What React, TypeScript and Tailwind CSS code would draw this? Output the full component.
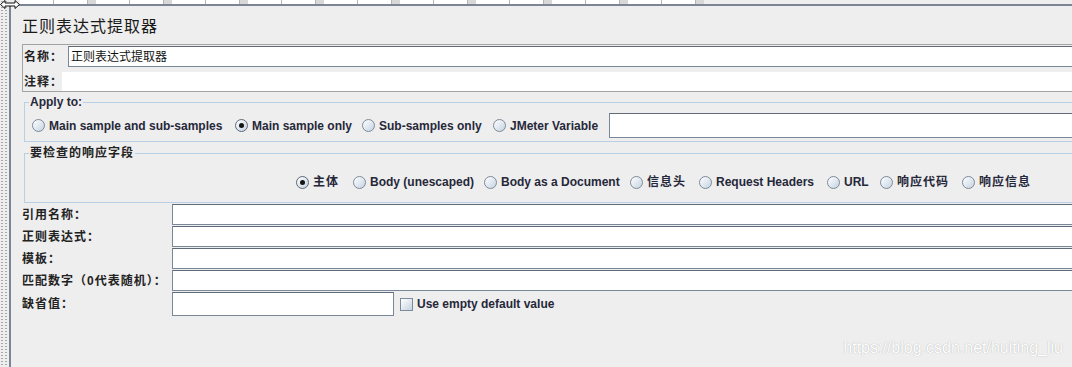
import React from "react";

const LATIN = "font-['Liberation_Sans','Noto_Sans_CJK_SC',sans-serif]";

function Radio({ checked }: { checked?: boolean }) {
  return (
    <span
      className={`flex h-[13px] w-[13px] shrink-0 items-center justify-center rounded-full border bg-linear-to-br from-white to-[#c5d3e2] ${
        checked ? "border-[#5c6878]" : "border-[#7d8a99]"
      }`}
    >
      {checked && <span className="h-[5px] w-[5px] rounded-full bg-[#151515]" />}
    </span>
  );
}

function RadioItem({ label, checked, cjk, w }: { label: string; checked?: boolean; cjk?: boolean; w: string }) {
  return (
    <div className={`flex shrink-0 items-center gap-[4px] ${w}`}>
      <Radio checked={checked} />
      <span className={`whitespace-nowrap text-[12px] font-bold leading-[14px] text-[#26283a] ${cjk ? "tracking-[1px]" : ""}`}>
        {label}
      </span>
    </div>
  );
}

const topCells = Array.from({ length: 18 }, (_, i) => i);

export default function App() {
  return (
    <div className={`relative flex h-[367px] w-[1072px] overflow-hidden bg-[#eeeeee] ${LATIN}`}>
      {/* left splitter strip */}
      <div className="h-full w-[9px] shrink-0 bg-[#eeeeee] bg-[radial-gradient(circle,#a8a8a8_0.8px,transparent_1.1px)] bg-[length:4px_3px]" />

      {/* splitter arrow */}
      <svg className="absolute left-0 top-0" width="21" height="10" viewBox="0 0 21 10">
        <polygon
          points="0.5,4.5 5,0.5 5,3 15,3 15,0.5 19.5,4.5 15,8.5 15,6 5,6 5,8.5"
          fill="#ffffff"
          stroke="#111111"
          strokeWidth="1"
        />
      </svg>

      <div className="flex w-[1130px] shrink-0 flex-col">
        {/* top strip (table header bottom) */}
        <div className="flex h-[4px] pl-[11px]">
          <div className="flex w-[697px] overflow-hidden">
            {topCells.map((i) => (
              <div key={i} className="flex shrink-0">
                <div className="w-[34px] border-r border-[#b5b5b5] bg-white" />
                {i % 2 === 1 ? <div className="w-[8px] bg-[#d8d8d8]" /> : null}
              </div>
            ))}
          </div>
        </div>
        <div className="h-[2px] bg-[#7b8595]" />

        <div className="flex flex-1 flex-col border-l-2 border-[#7b8595] pl-[11px]">
          {/* title */}
          <div className="mt-[10px] h-[22px] whitespace-nowrap text-[16px] leading-[22px] tracking-[1px] text-[#1a1a1a]">正则表达式提取器</div>

          {/* name / comments box */}
          <div className="mt-[6px] flex flex-col border border-[#a3a3a3] pt-[1px]">
            <div className="flex h-[21px] items-center">
              <div className="w-[45px] shrink-0 whitespace-nowrap pl-[1px] text-[12px] font-bold tracking-[1px] text-[#222222]">名称：</div>
              <div className="flex h-[21px] flex-1 items-center border border-[#7a8796] border-t-[#5f6b78] bg-white pl-[2px] text-[12px] text-[#111111]">
                正则表达式提取器
              </div>
            </div>
            <div className="mt-[5px] flex h-[19px] items-center">
              <div className="w-[39px] shrink-0 whitespace-nowrap pl-[1px] text-[12px] font-bold tracking-[1px] text-[#222222]">注释：</div>
              <div className="h-[19px] flex-1 bg-white" />
            </div>
          </div>

          {/* Apply to */}
          <fieldset className="ml-[2px] mt-[3px] border border-[#b8cfe6] pb-[3px]">
            <legend className="ml-[4px] px-[1px] text-[12px] font-bold leading-[14px] text-[#26283a]">Apply to:</legend>
            <div className="mt-[4px] flex h-[25px] items-center pl-[7px]">
              <RadioItem w="w-[203px]" label="Main sample and sub-samples" />
              <RadioItem w="w-[127px]" label="Main sample only" checked />
              <RadioItem w="w-[131px]" label="Sub-samples only" />
              <RadioItem w="w-[116px]" label="JMeter Variable" />
              <div className="h-[25px] flex-1 border border-[#7a8796] border-t-[#5f6b78] bg-white" />
            </div>
          </fieldset>

          {/* fields to check */}
          <fieldset className="ml-[2px] mt-[4px] border border-[#b8cfe6] pb-[10px]">
            <legend className="ml-[4px] px-[1px] text-[12px] font-bold leading-[14px] tracking-[1px] text-[#222222]">要检查的响应字段</legend>
            <div className="mt-[12px] flex h-[20px] items-center pl-[271px]">
              <RadioItem w="w-[57px]" label="主体" checked cjk />
              <RadioItem w="w-[131px]" label="Body (unescaped)" />
              <RadioItem w="w-[146px]" label="Body as a Document" />
              <RadioItem w="w-[69px]" label="信息头" cjk />
              <RadioItem w="w-[128px]" label="Request Headers" />
              <RadioItem w="w-[53px]" label="URL" />
              <RadioItem w="w-[82px]" label="响应代码" cjk />
              <RadioItem w="w-[80px]" label="响应信息" cjk />
            </div>
          </fieldset>

          {/* bottom fields */}
          <div className="mt-[1px] flex flex-col gap-[1px]">
            {["引用名称：", "正则表达式：", "模板：", "匹配数字（0代表随机）："].map((l) => (
              <div key={l} className="flex h-[21px] items-center">
                <div className="w-[150px] shrink-0 whitespace-nowrap text-[12px] font-bold tracking-[1px] text-[#222222]">{l}</div>
                <div className="h-[21px] flex-1 border border-[#7a8796] border-t-[#5f6b78] bg-white" />
              </div>
            ))}
            <div className="flex h-[24px] items-center">
              <div className="w-[150px] shrink-0 whitespace-nowrap text-[12px] font-bold tracking-[1px] text-[#222222]">缺省值：</div>
              <div className="h-[24px] w-[222px] border border-[#7a8796] border-t-[#5f6b78] bg-white" />
              <div className="ml-[6px] flex items-center gap-[4px]">
                <span className="h-[13px] w-[13px] border border-[#7d8a99] bg-linear-to-br from-white to-[#c5d3e2]" />
                <span className="text-[12px] font-bold leading-[14px] text-[#26283a]">Use empty default value</span>
              </div>
            </div>
          </div>
        </div>
      </div>

      {/* watermark */}
      <div className="absolute bottom-[7px] right-[9px] font-['Liberation_Sans',sans-serif] text-[16px] text-white [text-shadow:0_0_1px_#a0a0a0]">
        https://blog.csdn.net/huiting_liu
      </div>
    </div>
  );
}
